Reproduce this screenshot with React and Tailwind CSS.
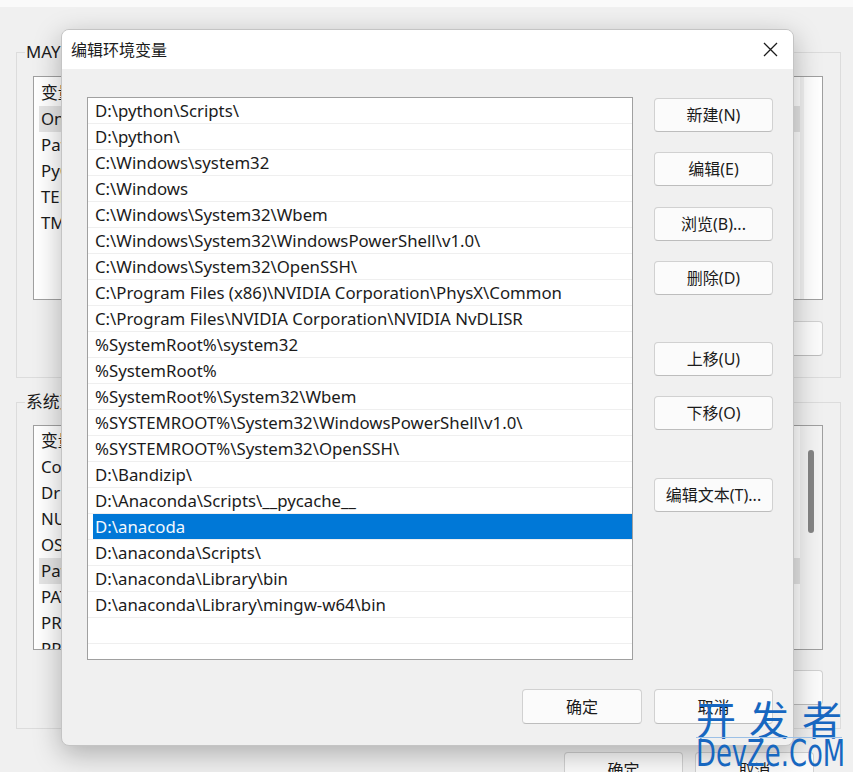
import React from "react";

const paths = [
  "D:\\python\\Scripts\\",
  "D:\\python\\",
  "C:\\Windows\\system32",
  "C:\\Windows",
  "C:\\Windows\\System32\\Wbem",
  "C:\\Windows\\System32\\WindowsPowerShell\\v1.0\\",
  "C:\\Windows\\System32\\OpenSSH\\",
  "C:\\Program Files (x86)\\NVIDIA Corporation\\PhysX\\Common",
  "C:\\Program Files\\NVIDIA Corporation\\NVIDIA NvDLISR",
  "%SystemRoot%\\system32",
  "%SystemRoot%",
  "%SystemRoot%\\System32\\Wbem",
  "%SYSTEMROOT%\\System32\\WindowsPowerShell\\v1.0\\",
  "%SYSTEMROOT%\\System32\\OpenSSH\\",
  "D:\\Bandizip\\",
  "D:\\Anaconda\\Scripts\\__pycache__",
  "D:\\anacoda",
  "D:\\anaconda\\Scripts\\",
  "D:\\anaconda\\Library\\bin",
  "D:\\anaconda\\Library\\mingw-w64\\bin",
  "",
];

const SELECTED = 16;

const userVars = ["OneDrive", "Path", "PyCharm Community Edition", "TEMP", "TMP"];
const sysVars = [
  "ComSpec",
  "DriverData",
  "NUMBER_OF_PROCESSORS",
  "OS",
  "Path",
  "PATHEXT",
  "PROCESSOR_ARCHITECTURE",
  "PROCESSOR_IDENTIFIER",
];

const WinButton = ({ children, className = "" }) => (
  <button
    type="button"
    className={`h-[34px] w-[119px] shrink-0 rounded-[4px] border border-[#d1d1d1] border-b-[#bdbdbd] bg-[#fbfbfb] text-[16px] leading-none text-[#1b1b1b] ${className}`}
  >
    {children}
  </button>
);

const VarList = ({ rows, active, height, pad, scroll }) => (
  <div className={`flex ${height} overflow-hidden border border-[#a0a0a0] bg-white`}>
    <div className={`flex-1 ${pad}`}>
      <div className="flex h-[26px] items-center pl-[7px] text-[16.8px]">
        <span className="w-[200px]">变量</span>
        <span>值</span>
      </div>
      {rows.map((r, i) => (
        <div key={r} className="flex h-[26px] pl-[5px]">
          <div
            className={`flex flex-1 items-center pl-[2px] text-[16.8px] ${
              i === active ? "bg-[#e5e5e5]" : ""
            }`}
          >
            {r}
          </div>
        </div>
      ))}
    </div>
    {scroll ? (
      <div className="w-[22px] bg-[#f3f3f3] pl-[8px] pt-[24px]">
        <div className="h-[83px] w-[6px] rounded-[3px] bg-[#858585]" />
      </div>
    ) : (
      <div className="w-[22px] border-l-[4px] border-[#f2f2f2]" />
    )}
  </div>
);

export default function App() {
  return (
    <div className="relative h-[772px] w-[853px] overflow-hidden bg-[#f0f0f0] font-[family-name:'Noto_Sans','Noto_Sans_CJK_SC',sans-serif] text-[#1b1b1b]">
      {/* background window */}
      <div className="h-[7px] bg-[#fafafa]" />
      <div className="pl-[16px] pr-[12px] pt-[35px]">
        <fieldset className="h-[336px] border border-[#dcdcdc]">
          <legend className="ml-[8px] px-[1px] text-[16.8px] leading-[20px]">
            MAYDAY 的用户变量(U)
          </legend>
          <div className="pl-[16px] pr-[17px] pt-[14px]">
            <VarList rows={userVars} active={0} height="h-[224px]" pad="pt-[3px]" />
            <div className="mt-[21px] flex justify-end gap-[12px]">
              <WinButton>新建(N)...</WinButton>
              <WinButton>编辑(E)...</WinButton>
              <WinButton className="h-[35px]">删除(D)</WinButton>
            </div>
          </div>
        </fieldset>
        <fieldset className="mt-[14px] h-[337px] border border-[#dcdcdc]">
          <legend className="ml-[8px] px-[1px] text-[16.8px] leading-[20px]">
            系统变量(S)
          </legend>
          <div className="pl-[16px] pr-[17px] pt-[13px]">
            <VarList rows={sysVars} active={4} height="h-[225px]" pad="pt-[2px]" scroll />
            <div className="mt-[20px] flex justify-end gap-[12px]">
              <WinButton>新建(W)...</WinButton>
              <WinButton>编辑(I)...</WinButton>
              <WinButton className="h-[35px]">删除(L)</WinButton>
            </div>
          </div>
        </fieldset>
        <div className="mt-[23px] flex justify-end gap-[12px] pr-[27px]">
          <WinButton className="h-[36px]">确定</WinButton>
          <WinButton className="h-[36px]">取消</WinButton>
        </div>
      </div>

      {/* dialog */}
      <div className="absolute left-[61px] top-[29px] flex h-[717px] w-[733px] flex-col overflow-hidden rounded-[8px] border border-[#c4c4c4] bg-[#f0f0f0] shadow-[0_8px_28px_rgba(0,0,0,0.28)]">
        <div className="flex h-[39px] shrink-0 items-center justify-between bg-white pl-[9px] pr-[15px]">
          <span className="text-[16px]">编辑环境变量</span>
          <svg width="15" height="15" viewBox="0 0 15 15">
            <path d="M1 1L14 14M14 1L1 14" stroke="#1b1b1b" strokeWidth="1.3" fill="none" />
          </svg>
        </div>
        <div className="flex flex-1 flex-col pb-[21px] pl-[25px] pr-[20px] pt-[28px]">
          <div className="flex gap-[21px]">
            <div className="h-[563px] w-[546px] overflow-hidden border border-[#a0a0a0] bg-white">
              {paths.map((p, i) => (
                <div key={i} className="flex h-[26px] border-b border-[#efefef] text-[16.8px]">
                  {i === SELECTED ? (
                    <div className="ml-[5px] flex flex-1 items-center bg-[#0078d7] pl-[2px] pt-[1px] text-[#f4f8fd]">
                      {p}
                    </div>
                  ) : (
                    <div className="flex items-center pl-[7px] pt-[1px]">{p}</div>
                  )}
                </div>
              ))}
            </div>
            <div className="flex flex-col pt-[1px]">
              <WinButton>新建(N)</WinButton>
              <WinButton className="mt-[20px]">编辑(E)</WinButton>
              <WinButton className="mt-[21px]">浏览(B)...</WinButton>
              <WinButton className="mt-[20px]">删除(D)</WinButton>
              <WinButton className="mt-[47px]">上移(U)</WinButton>
              <WinButton className="mt-[20px]">下移(O)</WinButton>
              <WinButton className="mt-[48px]">编辑文本(T)...</WinButton>
            </div>
          </div>
          <div className="mt-auto flex justify-end gap-[12px]">
            <WinButton className="h-[35px] w-[120px] border-[#5a9bd8] border-b-[#3f87cf]">确定</WinButton>
            <WinButton className="h-[35px]">取消</WinButton>
          </div>
        </div>
      </div>

      {/* watermark */}
      <div className="absolute bottom-[3px] right-[11px] flex w-[146px] flex-col text-[#1767c0]">
        <div className="flex justify-between text-[40px] leading-[37px] font-[family-name:'Noto_Sans_CJK_SC',sans-serif]">
          <span>开</span>
          <span>发</span>
          <span>者</span>
        </div>
        <div className="h-px w-[146px] bg-[#9cc0e6]" />
        <div className="origin-left scale-x-[0.68] whitespace-nowrap text-[38px] leading-[31px] font-[family-name:'DejaVu_Sans',sans-serif]">
          DevZe.CoM
        </div>
      </div>
    </div>
  );
}
